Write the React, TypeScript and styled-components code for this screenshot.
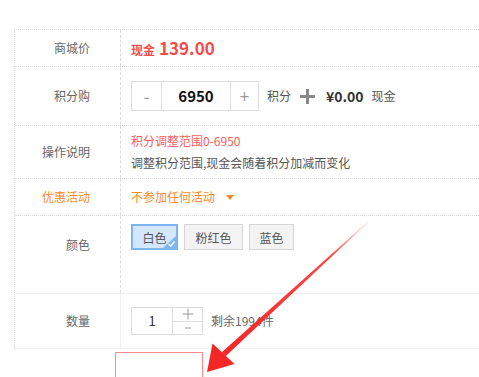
import React from "react";
import styled, { createGlobalStyle } from "styled-components";

const Global = createGlobalStyle`
  html, body { margin: 0; padding: 0; background: #fff; overflow: hidden; }
  body { font-family: "Noto Sans CJK SC", "Noto Sans", sans-serif; font-size: 12px; color: #555; }
`;

const Page = styled.div`
  position: relative;
  width: 479px;
  height: 377px;
  overflow: hidden;
  padding: 29px 0 0 14px;
  box-sizing: border-box;
`;

const Table = styled.div`
  width: 520px;
  border-top: 1px dotted #dcdcdc;
  border-left: 1px dotted #dcdcdc;
  display: flex;
  flex-direction: column;
`;

const Row = styled.div<{ $h: number; $solid?: boolean; $top?: boolean }>`
  display: grid;
  grid-template-columns: 106px 1fr;
  height: ${(p) => p.$h}px;
  box-sizing: border-box;
  border-bottom: 1px ${(p) => (p.$solid ? "solid #efefef" : "dotted #d8d8d8")};
  align-items: ${(p) => (p.$top ? "start" : "center")};
`;

const Label = styled.div<{ $orange?: boolean; $pt?: number; $solid?: boolean }>`
  align-self: stretch;
  display: flex;
  align-items: ${(p) => (p.$pt ? "flex-start" : "center")};
  justify-content: flex-end;
  padding-right: 30px;
  padding-top: ${(p) => p.$pt ?? 0}px;
  border-right: 1px ${(p) => (p.$solid ? "solid #efefef" : "dashed #dcdcdc")};
  color: ${(p) => (p.$orange ? "#ff8a1e" : "#666")};
  font-size: 12px;
  line-height: 16px;
`;

const Value = styled.div`
  padding-left: 10px;
  display: flex;
  align-items: center;
  line-height: 16px;
`;

const PriceTag = styled.span`
  color: #f74b4b;
  font-weight: bold;
  font-size: 12px;
  margin-right: 4px;
  margin-top: 3px;
`;

const Price = styled.span`
  color: #f74b4b;
  font-weight: bold;
  font-size: 17px;
`;

const Stepper = styled.div`
  display: flex;
  height: 30px;
  border: 1px solid #dcdcdc;
  box-sizing: border-box;
`;

const StepBtn = styled.div<{ $w: number }>`
  width: ${(p) => p.$w}px;
  display: flex;
  align-items: center;
  justify-content: center;
  color: #999;
  font-size: 17px;
`;

const StepInput = styled.div`
  width: 68px;
  border-left: 1px solid #dcdcdc;
  border-right: 1px solid #dcdcdc;
  display: flex;
  align-items: center;
  justify-content: center;
  color: #111;
  font-weight: bold;
  font-size: 15px;
`;

const Unit = styled.span<{ $ml: number }>`
  margin-left: ${(p) => p.$ml}px;
  color: #555;
  font-size: 12px;
`;

const BigPlus = styled.span`
  position: relative;
  width: 15px;
  height: 15px;
  margin-left: 9px;
  &::before, &::after {
    content: "";
    position: absolute;
    background: #888;
  }
  &::before { left: 0; right: 0; top: 6px; height: 3px; }
  &::after { top: 0; bottom: 0; left: 6px; width: 3px; }
`;

const Cash = styled.span`
  margin-left: 11px;
  color: #333;
  font-weight: bold;
  font-size: 14px;
`;

const Lines = styled.div`
  display: flex;
  flex-direction: column;
  line-height: 22px;
  padding-left: 10px;
`;

const RedLine = styled.span`
  color: #ff5c5c;
`;

const Activity = styled.span`
  color: #ff8a1e;
  display: flex;
  align-items: center;
`;

const Caret = styled.span`
  margin-left: 11px;
  width: 0;
  height: 0;
  border-left: 4px solid transparent;
  border-right: 4px solid transparent;
  border-top: 5px solid #ff8a1e;
`;

const Options = styled.div`
  display: flex;
  gap: 6px;
  padding-left: 10px;
  padding-top: 8px;
`;

const Option = styled.div<{ $w: number; $active?: boolean }>`
  position: relative;
  width: ${(p) => p.$w}px;
  height: 26px;
  box-sizing: border-box;
  display: flex;
  align-items: center;
  justify-content: center;
  font-size: 12px;
  color: #555;
  background: ${(p) => (p.$active ? "#d5e7fc" : "#f3f3f3")};
  border: ${(p) => (p.$active ? "2px solid #7db5f0" : "1px solid #d6d6d6")};
`;

const Check = styled.svg`
  position: absolute;
  right: 0;
  bottom: 0;
`;

const QtyStepper = styled.div`
  display: flex;
  height: 28px;
  border: 1px solid #dcdcdc;
  box-sizing: border-box;
`;

const QtyInput = styled.div`
  width: 40px;
  display: flex;
  align-items: center;
  justify-content: center;
  border-right: 1px solid #dcdcdc;
  color: #333;
  font-size: 13px;
`;

const QtyBtns = styled.div`
  width: 29px;
  display: flex;
  flex-direction: column;
`;

const QtyBtn = styled.div<{ $plus?: boolean }>`
  position: relative;
  flex: 1;
  & + & { border-top: 1px solid #dcdcdc; }
  &::before, &::after {
    content: "";
    position: absolute;
    left: 50%;
    top: 50%;
    background: #999;
  }
  &::before {
    width: ${(p) => (p.$plus ? 11 : 6)}px;
    height: 1px;
    transform: translate(-50%, -50%);
  }
  &::after {
    display: ${(p) => (p.$plus ? "block" : "none")};
    width: 1px;
    height: 11px;
    transform: translate(-50%, -50%);
  }
`;

const Stock = styled.span`
  margin-left: 8px;
  color: #666;
`;

const RedBox = styled.div`
  margin: 3px 0 0 101px;
  width: 88px;
  height: 40px;
  border: 1px solid #ff8a8a;
  box-sizing: border-box;
`;

const Overlay = styled.svg`
  position: absolute;
  left: 0;
  top: 0;
  pointer-events: none;
`;

export default function App() {
  return (
    <>
      <Global />
      <Page>
        <Table>
          <Row $h={37}>
            <Label>商城价</Label>
            <Value>
              <PriceTag>现金</PriceTag>
              <Price>139.00</Price>
            </Value>
          </Row>
          <Row $h={59}>
            <Label>积分购</Label>
            <Value>
              <Stepper>
                <StepBtn $w={29}>-</StepBtn>
                <StepInput>6950</StepInput>
                <StepBtn $w={27}>+</StepBtn>
              </Stepper>
              <Unit $ml={8}>积分</Unit>
              <BigPlus />
              <Cash>¥0.00</Cash>
              <Unit $ml={8}>现金</Unit>
            </Value>
          </Row>
          <Row $h={53}>
            <Label>操作说明</Label>
            <Lines>
              <RedLine>积分调整范围0-6950</RedLine>
              <span>调整积分范围,现金会随着积分加减而变化</span>
            </Lines>
          </Row>
          <Row $h={37}>
            <Label $orange>优惠活动</Label>
            <Value>
              <Activity>
                不参加任何活动
                <Caret />
              </Activity>
            </Value>
          </Row>
          <Row $h={78} $solid $top>
            <Label $pt={21}>颜色</Label>
            <Options>
              <Option $w={47} $active>
                白色
                <Check width="13" height="12" viewBox="0 0 13 12">
                  <polygon points="13,0 13,12 0,12" fill="#7db5f0" />
                  <polyline points="5.5,8 7.8,10 11.5,5.5" fill="none" stroke="#fff" strokeWidth="1.5" />
                </Check>
              </Option>
              <Option $w={59}>粉红色</Option>
              <Option $w={45}>蓝色</Option>
            </Options>
          </Row>
          <Row $h={55} $solid>
            <Label $solid>数量</Label>
            <Value>
              <QtyStepper>
                <QtyInput>1</QtyInput>
                <QtyBtns>
                  <QtyBtn $plus aria-label="+" />
                  <QtyBtn aria-label="-" />
                </QtyBtns>
              </QtyStepper>
              <Stock>剩余1994件</Stock>
            </Value>
          </Row>
        </Table>
        <RedBox />
        <Overlay width="479" height="377" viewBox="0 0 479 377">
          <defs>
            <linearGradient id="shaft" x1="368" y1="222" x2="224" y2="354" gradientUnits="userSpaceOnUse">
              <stop offset="0" stopColor="#ff3b3b" stopOpacity="0.1" />
              <stop offset="0.25" stopColor="#ff3030" stopOpacity="0.9" />
              <stop offset="1" stopColor="#f52626" />
            </linearGradient>
          </defs>
          <polygon points="368.3,222.3 367.7,221.7 221.8,352.3 225.6,356.3" fill="url(#shaft)" />
          <polygon points="207,372 212.5,343.5 234.5,364" fill="#f52626" />
        </Overlay>
      </Page>
    </>
  );
}
